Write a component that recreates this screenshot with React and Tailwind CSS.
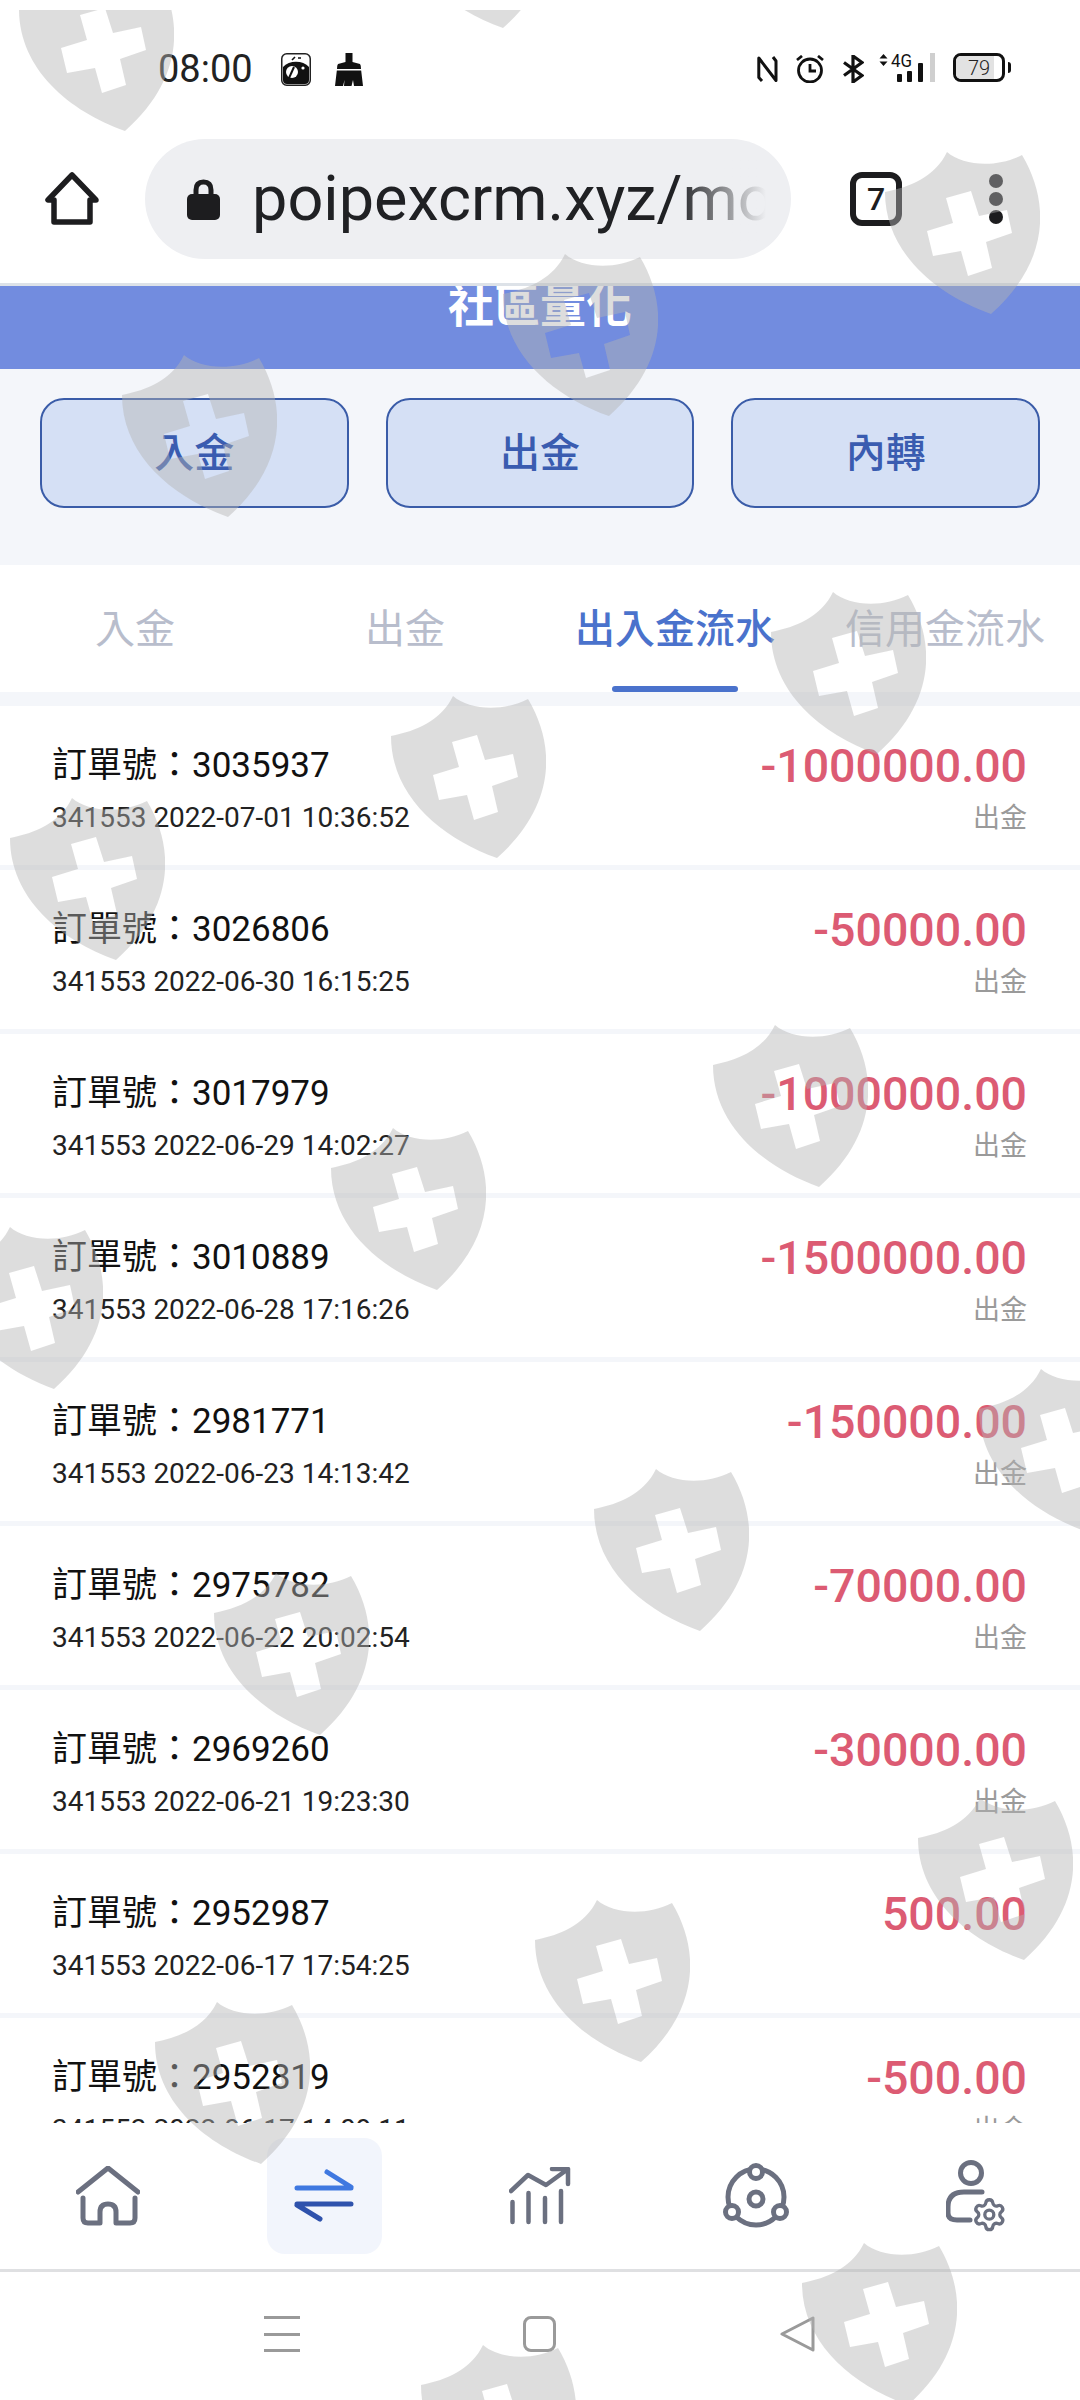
import { Settings } from 'lucide-react';

const TABS = [
    { label: '入金', active: false },
    { label: '出金', active: false },
    { label: '出入金流水', active: true },
    { label: '信用金流水', active: false },
];

const ORDERS = [
    { id: '3035937', time: '2022-07-01 10:36:52', amount: '-1000000.00', type: '出金' },
    { id: '3026806', time: '2022-06-30 16:15:25', amount: '-50000.00', type: '出金' },
    { id: '3017979', time: '2022-06-29 14:02:27', amount: '-1000000.00', type: '出金' },
    { id: '3010889', time: '2022-06-28 17:16:26', amount: '-1500000.00', type: '出金' },
    { id: '2981771', time: '2022-06-23 14:13:42', amount: '-150000.00', type: '出金' },
    { id: '2975782', time: '2022-06-22 20:02:54', amount: '-70000.00', type: '出金' },
    { id: '2969260', time: '2022-06-21 19:23:30', amount: '-30000.00', type: '出金' },
    { id: '2952987', time: '2022-06-17 17:54:25', amount: '500.00', type: '' },
    { id: '2952819', time: '2022-06-17 14:09:11', amount: '-500.00', type: '出金' },
];

// watermark spots, relative to the overlay which starts at y=10
const SHIELDS = [
    'left-[19px] top-[-41px]',
    'left-[397px] top-[-144px]',
    'left-[885px] top-[142px]',
    'left-[503px] top-[244px]',
    'left-[122px] top-[345px]',
    'left-[771px] top-[582px]',
    'left-[391px] top-[686px]',
    'left-[10px] top-[788px]',
    'left-[713px] top-[1015px]',
    'left-[331px] top-[1118px]',
    'left-[-52px] top-[1217px]',
    'left-[979px] top-[1359px]',
    'left-[594px] top-[1459px]',
    'left-[214px] top-[1563px]',
    'left-[918px] top-[1788px]',
    'left-[535px] top-[1890px]',
    'left-[155px] top-[1992px]',
    'left-[802px] top-[2233px]',
    'left-[421px] top-[2335px]',
];

function Shield({ className }) {
    return (
        <svg viewBox="0 0 155 163" className={`absolute h-[163px] w-[155px] ${className}`}>
            <path
                fillRule="evenodd"
                fill="#b4b4b4"
                fillOpacity="0.45"
                d="M62 0C78 14 112 16 137 3C165 50 165 110 106 162C50 142 0 100 0 40C25 35 50 25 62 0ZM61 46L86 39L94 64L122 58L127 81L101 90L107 116L83 124L76 99L48 104L42 79L68 71Z"
            />
        </svg>
    );
}

function StatusBar() {
    return (
        <div className="flex h-[136px] items-start pt-[53px]">
            <span className="ml-[158px] w-[123px] text-[38px] leading-[32px] text-[#222]">08:00</span>
            <svg viewBox="0 0 30 33" className="h-[33px] w-[30px]">
                <rect x="0.75" y="0.75" width="28.5" height="31.5" rx="5" fill="#fff" stroke="#222" strokeWidth="1.5" />
                <path d="M2 14C8 7 22 7 28 14V27Q28 31 24 31H6Q2 31 2 27Z" fill="#111" />
                <circle cx="11" cy="19" r="6" fill="#fff" />
                <path d="M13 14L8 25" stroke="#111" strokeWidth="2" />
                <circle cx="22" cy="15" r="1.6" fill="#fff" />
                <path d="M11 7L14 4M17 5L20 5" stroke="#111" strokeWidth="1.6" />
            </svg>
            <svg viewBox="0 0 28 33" className="ml-[24px] h-[33px] w-[28px]">
                <path d="M10.5 0H17.5V9L25 11Q26 12 26 16L28 33H19L18 27L16.5 33H9L9.5 27L8 33H0L2 16Q2 12 3 11L10.5 9Z" fill="#111" />
                <rect x="0" y="16" width="28" height="1.5" fill="#fff" />
            </svg>
            <svg viewBox="0 0 21 28" className="ml-[394px] mt-[2px] h-[28px] w-[21px]" fill="none" stroke="#111" strokeWidth="3">
                <path d="M5 26L1.8 22.5V3L19 25.5V6L16 2" strokeLinejoin="round" />
            </svg>
            <svg viewBox="0 0 30 28" className="ml-[17px] mt-[2px] h-[28px] w-[30px]" fill="none" stroke="#111" strokeWidth="2.8">
                <circle cx="15" cy="15.5" r="11.5" />
                <path d="M15 9V16H21M2 5L7 1M28 5L23 1" />
            </svg>
            <svg viewBox="0 0 21 28" className="ml-[18px] mt-[2px] h-[28px] w-[21px]" fill="none" stroke="#111" strokeWidth="3.2">
                <path d="M1 7.5L19 20.5L10 27V1L19 7.5L1 20.5" strokeLinejoin="miter" />
            </svg>
            <svg viewBox="0 0 56 30" className="ml-[15px] h-[30px] w-[56px]">
                <path d="M4.5 1L8.5 5.5H.5ZM4.5 13L8.5 8.5H.5Z" fill="#111" />
                <text x="12" y="14" fontSize="18" fill="#111" textLength="21" lengthAdjust="spacingAndGlyphs">4G</text>
                <rect x="18" y="21" width="5" height="8" rx="1" fill="#111" />
                <rect x="28" y="18" width="5" height="11" rx="1" fill="#111" />
                <rect x="39" y="10" width="5" height="19" rx="1" fill="#111" />
                <rect x="51" y="0" width="5" height="29" fill="#cfcfcf" />
            </svg>
            <div className="ml-[18px] flex items-center">
                <div className="relative flex h-[29px] w-[52px] items-center justify-center overflow-hidden rounded-[8px] border-[3px] border-[#111]">
                    <div className="absolute inset-y-0 left-0 w-[38px] bg-[#e2e2e2]" />
                    <span className="relative text-[20px] leading-none font-light text-[#222]">79</span>
                </div>
                <div className="ml-[3px] h-[11px] w-[3px] rounded-r-sm bg-[#111]" />
            </div>
        </div>
    );
}

function Toolbar() {
    return (
        <div className="flex h-[147px] items-start">
            <svg viewBox="0 0 54 54" className="ml-[45px] mt-[36px] h-[54px] w-[54px]" fill="none" stroke="#1d1d1f" strokeWidth="5.5" strokeLinejoin="round">
                <path d="M27 3L3 28H9V50H45V28H51Z" />
            </svg>
            <div className="relative ml-[46px] mt-[3px] flex h-[120px] w-[646px] items-center overflow-hidden rounded-full bg-[#eeeff2]">
                <svg viewBox="0 0 33 41" className="ml-[42px] h-[41px] w-[33px]">
                    <path d="M9 18V11Q9 3 16.5 3Q24 3 24 11V18" fill="none" stroke="#1d1d1f" strokeWidth="5" />
                    <rect x="0" y="15" width="33" height="26" rx="5" fill="#1d1d1f" />
                </svg>
                <div className="relative ml-[32px] w-[514px] overflow-hidden">
                    <span className="block whitespace-nowrap text-[63px] leading-[84px] text-[#202124]">poipexcrm.xyz/mo</span>
                    <div className="absolute inset-y-0 right-0 w-[90px] bg-linear-to-r from-[#eeeff2]/0 to-[#eeeff2]" />
                </div>
            </div>
            <div className="ml-[59px] mt-[36px] flex h-[54px] w-[52px] items-center justify-center rounded-[12px] border-[6px] border-[#1d1d1f]">
                <span className="text-[32px] leading-none font-medium text-[#1d1d1f]">7</span>
            </div>
            <div className="ml-[87px] mt-[38px] flex flex-col gap-[4px]">
                <div className="h-[14px] w-[14px] rounded-full bg-[#1d1d1f]" />
                <div className="h-[14px] w-[14px] rounded-full bg-[#1d1d1f]" />
                <div className="h-[14px] w-[14px] rounded-full bg-[#1d1d1f]" />
            </div>
        </div>
    );
}

function OrderRow({ order }) {
    return (
        <div className="flex h-[164px] justify-between border-b-[5px] border-[#f4f6fa] bg-white pl-[52px] pr-[53px] pt-[38px]">
            <div>
                <div className="h-[44px] text-[35px] leading-[44px] text-[#111]">訂單號：{order.id}</div>
                <div className="mt-[12px] h-[36px] text-[28px] leading-[36px] text-[#222]">341553 {order.time}</div>
            </div>
            <div className="text-right">
                <div className="h-[44px] text-[46.5px] leading-[44px] font-medium text-[#dc5b73]">{order.amount}</div>
                <div className="mt-[12px] h-[36px] text-[27px] leading-[36px] text-[#9a9a9a]">{order.type}</div>
            </div>
        </div>
    );
}

function BottomNav() {
    return (
        <div className="grid h-[146px] grid-cols-5 items-center justify-items-center bg-white">
            <svg viewBox="0 0 64 60" className="h-[60px] w-[64px]" fill="none" stroke="#6b7080" strokeWidth="5" strokeLinecap="round" strokeLinejoin="round">
                <path d="M2 26L32 2L62 26" />
                <path d="M7 32V52Q7 57 12 57H24V46Q24 38 32 38Q40 38 40 46V57H54Q59 57 59 52V32" />
            </svg>
            <div className="flex h-[116px] w-[115px] items-center justify-center rounded-[18px] bg-[#f2f5fc]">
                <svg viewBox="0 0 62 56" className="h-[56px] w-[62px]" fill="none" strokeWidth="5" strokeLinecap="round">
                    <path d="M4 20H58M34 4L58 19" stroke="#3f78e0" />
                    <path d="M4 36H58M4 37L27 51" stroke="#2f52ac" />
                </svg>
            </div>
            <svg viewBox="0 0 62 58" className="h-[58px] w-[62px]" fill="none" stroke="#6b7080" strokeWidth="4.5" strokeLinecap="round" strokeLinejoin="round">
                <path d="M3.5 35V55M19.5 26V55M36 31V55M52 24V55" />
                <path d="M2 24L19 8L37 18L59 2M43 2H59V17" />
            </svg>
            <svg viewBox="0 0 66 66" className="h-[66px] w-[66px]" fill="none" stroke="#6b7080" strokeWidth="5">
                <circle cx="33" cy="34" r="28" />
                <circle cx="33" cy="9" r="6.5" fill="#fff" />
                <circle cx="9" cy="49" r="6.5" fill="#fff" />
                <circle cx="57" cy="49" r="6.5" fill="#fff" />
                <circle cx="33" cy="36" r="7" />
            </svg>
            <svg viewBox="0 0 62 72" className="ml-[10px] h-[72px] w-[62px]" fill="none" stroke="#6b7080" strokeWidth="5" strokeLinecap="round">
                <circle cx="25" cy="13" r="10.5" />
                <path d="M36 32H18Q2 32 2 47V53Q2 60 11 60H24" />
                <Settings x="25.3" y="36.7" width="36" height="36" strokeWidth="2.2" color="#6b7080" />
            </svg>
        </div>
    );
}

function AndroidNav() {
    return (
        <div className="flex h-[128px] items-start border-t-[3px] border-[#dfe0e2] pt-[44px]">
            <div className="ml-[264px] flex h-[36px] w-[36px] flex-col justify-between">
                <div className="h-[3px] bg-[#9a9a9a]" />
                <div className="h-[3px] bg-[#9a9a9a]" />
                <div className="h-[3px] bg-[#9a9a9a]" />
            </div>
            <div className="ml-[223px] h-[36px] w-[33px] rounded-[8px] border-[3px] border-[#9a9a9a]" />
            <svg viewBox="0 0 35 36" className="ml-[224px] h-[36px] w-[35px]" fill="none" stroke="#9a9a9a" strokeWidth="3" strokeLinejoin="round">
                <path d="M33 2V34L2 18Z" />
            </svg>
        </div>
    );
}

export default function App() {
    return (
        <div className="relative flex h-[2400px] w-[1080px] flex-col overflow-hidden bg-white font-[Roboto,'Noto_Sans_CJK_TC',sans-serif]">
            <StatusBar />
            <Toolbar />

            <div className="h-[3px] bg-[#dde2e8]" />

            <main className="h-[1837px] overflow-hidden bg-[#f4f6fa]">
                <div className="flex h-[83px] justify-center overflow-hidden bg-[#728cdf]">
                    <h1 className="-mt-[2px] text-[46px] leading-[44px] font-bold text-white">社區量化</h1>
                </div>

                <div className="flex gap-[37px] px-[40px] pb-[57px] pt-[29px]">
                    {['入金', '出金', '內轉'].map((label) => (
                        <button
                            key={label}
                            type="button"
                            className="h-[110px] flex-1 rounded-[24px] border-2 border-[#3a5ca8] bg-[#d5e0f5] pt-[2px] text-[40px] font-medium text-[#3a5cb0]"
                        >
                            {label}
                        </button>
                    ))}
                </div>

                <div className="grid h-[127px] grid-cols-4 bg-white">
                    {TABS.map((tab) => (
                        <div key={tab.label} className="relative flex h-[127px] justify-center pt-[43px]">
                            <span className={`whitespace-nowrap text-[40px] leading-[44px] ${tab.active ? 'font-medium text-[#4a72cc]' : 'text-[#b8bdcc]'}`}>
                                {tab.label}
                            </span>
                            {tab.active && <div className="absolute bottom-0 h-[6px] w-[126px] rounded-full bg-[#4a72cc]" />}
                        </div>
                    ))}
                </div>

                <div className="mt-[14px]">
                    {ORDERS.map((order) => (
                        <OrderRow key={order.id} order={order} />
                    ))}
                </div>
            </main>

            <BottomNav />
            <AndroidNav />

            <div className="pointer-events-none absolute inset-x-0 bottom-0 top-[10px] overflow-hidden">
                {SHIELDS.map((spot) => (
                    <Shield key={spot} className={spot} />
                ))}
            </div>
        </div>
    );
}
